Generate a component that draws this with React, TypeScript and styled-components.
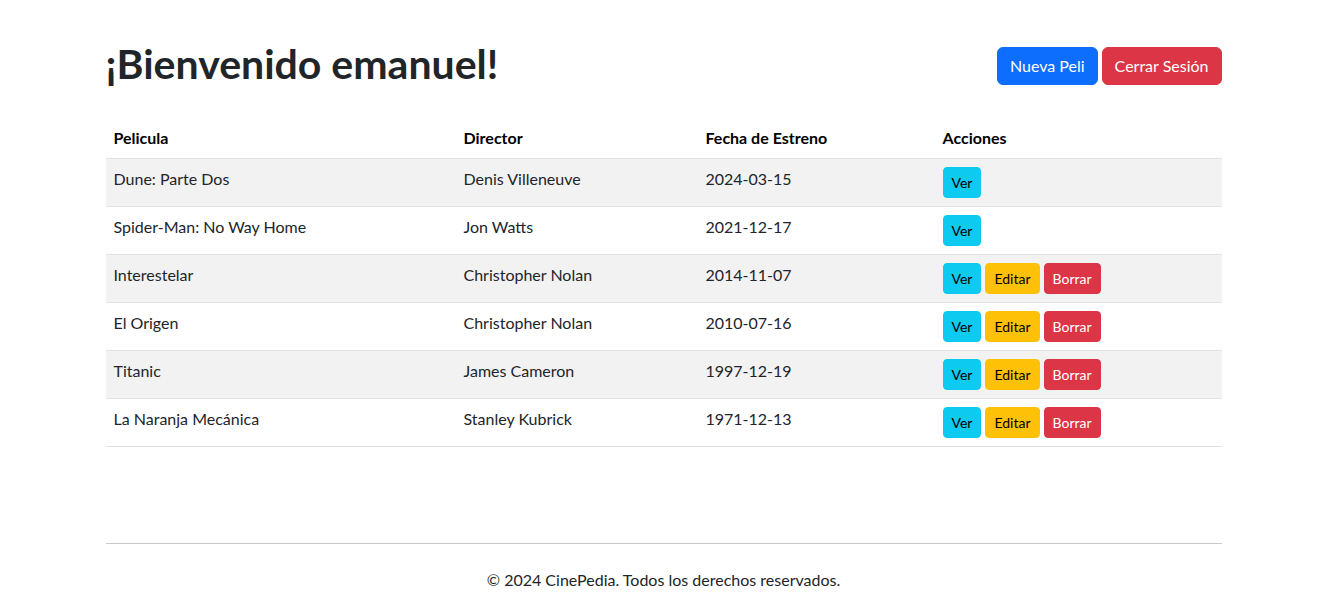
import React from "react";
import styled, { createGlobalStyle } from "styled-components";

const Global = createGlobalStyle`
  * { box-sizing: border-box; }
  body {
    margin: 0;
    font-family: Lato, "Noto Sans", sans-serif;
    font-size: 16px;
    line-height: 1.5;
    color: #212529;
    background: #fff;
  }
`;

const Container = styled.div`
  max-width: 1142px;
  margin: 0 auto;
  padding: 37px 12px 0 14px;
`;

const Header = styled.header`
  display: flex;
  justify-content: space-between;
  align-items: center;
  margin-bottom: 24px;
`;

const Title = styled.h1`
  margin: 0 0 8px;
  padding-top: 4px;
  font-size: 41px;
  font-weight: 700;
  line-height: 1.1;
  color: #212529;
`;

const Actions = styled.div`
  display: flex;
  gap: 4px;
`;

type Variant = "primary" | "danger" | "info" | "warning";

const palette: Record<Variant, { bg: string; fg: string }> = {
  primary: { bg: "#0d6efd", fg: "#fff" },
  danger: { bg: "#dc3545", fg: "#fff" },
  info: { bg: "#0dcaf0", fg: "#000" },
  warning: { bg: "#ffc107", fg: "#000" },
};

const Button = styled.button<{ $variant: Variant; $small?: boolean }>`
  font-family: inherit;
  border: 1px solid ${(p) => palette[p.$variant].bg};
  background: ${(p) => palette[p.$variant].bg};
  color: ${(p) => palette[p.$variant].fg};
  font-size: ${(p) => (p.$small ? "14px" : "16px")};
  line-height: 1.5;
  padding: ${(p) => (p.$small ? "4px 8px" : "6px 12px")};
  border-radius: ${(p) => (p.$small ? "4px" : "6px")};
  cursor: pointer;
`;

const Table = styled.table`
  width: 100%;
  border-collapse: collapse;
  margin-bottom: 16px;
  color: #212529;
`;

const Th = styled.th<{ $w?: number }>`
  text-align: left;
  vertical-align: bottom;
  font-weight: 700;
  color: #000;
  padding: 8px;
  border-bottom: 1px solid #dee2e6;
  width: ${(p) => (p.$w ? `${p.$w}px` : "auto")};
`;

const Row = styled.tr<{ $striped: boolean }>`
  background: ${(p) => (p.$striped ? "#f2f2f2" : "#fff")};
`;

const Td = styled.td`
  padding: 8px;
  vertical-align: top;
  border-bottom: 1px solid #dee2e6;
`;

const CellActions = styled.div`
  display: flex;
  gap: 4px;
`;

const Footer = styled.footer`
  margin-top: 96px;
  text-align: center;
`;

const Rule = styled.hr`
  margin: 0 0 24px;
  border: 0;
  border-top: 1px solid #212529;
  opacity: 0.25;
`;

const Copy = styled.p`
  margin: 0;
  color: #212529;
`;

const movies = [
  { t: "Dune: Parte Dos", d: "Denis Villeneuve", f: "2024-03-15", full: false },
  { t: "Spider-Man: No Way Home", d: "Jon Watts", f: "2021-12-17", full: false },
  { t: "Interestelar", d: "Christopher Nolan", f: "2014-11-07", full: true },
  { t: "El Origen", d: "Christopher Nolan", f: "2010-07-16", full: true },
  { t: "Titanic", d: "James Cameron", f: "1997-12-19", full: true },
  { t: "La Naranja Mecánica", d: "Stanley Kubrick", f: "1971-12-13", full: true },
];

export default function App() {
  return (
    <>
      <Global />
      <Container>
        <Header>
          <Title>¡Bienvenido emanuel!</Title>
          <Actions>
            <Button $variant="primary">Nueva Peli</Button>
            <Button $variant="danger">Cerrar Sesión</Button>
          </Actions>
        </Header>
        <Table>
          <thead>
            <tr>
              <Th $w={350}>Pelicula</Th>
              <Th $w={242}>Director</Th>
              <Th $w={237}>Fecha de Estreno</Th>
              <Th>Acciones</Th>
            </tr>
          </thead>
          <tbody>
            {movies.map((m, i) => (
              <Row key={m.t} $striped={i % 2 === 0}>
                <Td>{m.t}</Td>
                <Td>{m.d}</Td>
                <Td>{m.f}</Td>
                <Td>
                  <CellActions>
                    <Button $variant="info" $small>Ver</Button>
                    {m.full && <Button $variant="warning" $small>Editar</Button>}
                    {m.full && <Button $variant="danger" $small>Borrar</Button>}
                  </CellActions>
                </Td>
              </Row>
            ))}
          </tbody>
        </Table>
        <Footer>
          <Rule />
          <Copy>© 2024 CinePedia. Todos los derechos reservados.</Copy>
        </Footer>
      </Container>
    </>
  );
}
